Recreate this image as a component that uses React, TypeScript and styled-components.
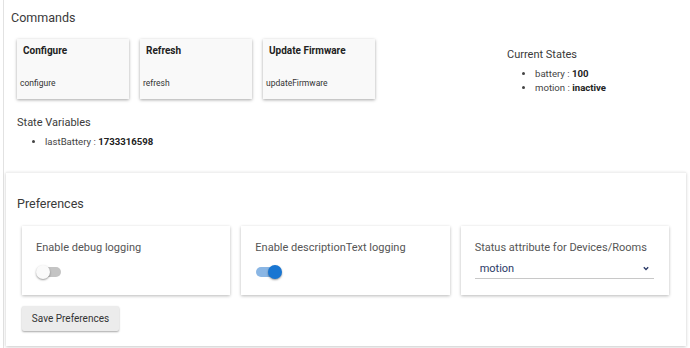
import React from 'react';
import styled, { createGlobalStyle } from 'styled-components';

const GlobalStyle = createGlobalStyle`
  body {
    margin: 0;
    background: #fff;
    font-family: Roboto, 'Liberation Sans', sans-serif;
    color: #333;
  }
`;

const Frame = styled.div`
  padding-left: 3px;
`;

const Inner = styled.div`
  border-left: 1px solid #e2e2e2;
  min-height: 348px;
  box-sizing: border-box;
  padding: 10px 4px 2px 2px;
`;

const Top = styled.div`
  display: flex;
  padding: 0 0 23px 5px;
`;

const LeftCol = styled.div`
  width: 496px;
`;

const RightCol = styled.div`
  padding-top: 38px;
`;

const Heading = styled.div<{ $size?: number }>`
  font-size: ${(p) => p.$size ?? 11}px;
  line-height: ${(p) => (p.$size ? 16 : 14)}px;
  color: #3a3a3a;
`;

const CommandRow = styled.div`
  display: flex;
  gap: 11px;
  margin: 13px 0 17px 6px;
`;

const CommandCard = styled.div`
  width: 112px;
  height: 60px;
  box-sizing: border-box;
  background: #f9f9f9;
  box-shadow: 0 1px 3px rgba(0, 0, 0, 0.35);
  display: flex;
  flex-direction: column;
  justify-content: space-between;
`;

const CommandTitle = styled.div`
  font-size: 10px;
  line-height: 14px;
  font-weight: 700;
  color: #222;
  padding: 5px 6px 0;
`;

const CommandName = styled.div`
  font-size: 8.5px;
  line-height: 12px;
  color: #333;
  padding: 0 3px 10px;
`;

const Section = styled.div`
  padding-left: 6px;
`;

const List = styled.ul<{ $indent: number }>`
  margin: 5px 0 0;
  padding-left: ${(p) => p.$indent}px;
  font-size: 9.6px;
  line-height: 14px;
  color: #444;

  b {
    color: #222;
  }
`;

const PrefCard = styled.div`
  background: #fff;
  box-shadow: 0 1px 3px rgba(0, 0, 0, 0.22);
  border-top: 1px solid #f0f0f0;
  padding: 23px 17px 15px 11px;
`;

const PrefGrid = styled.div`
  display: grid;
  grid-template-columns: repeat(3, 1fr);
  gap: 11px;
  margin: 14px 0 11px 5px;
`;

const PrefItem = styled.div`
  height: 69px;
  box-sizing: border-box;
  padding: 15px 15px 0 14px;
  background: #fff;
  box-shadow: 0 1px 3px rgba(0, 0, 0, 0.28);
`;

const PrefLabel = styled.div`
  font-size: 11px;
  line-height: 14px;
  color: #555;
`;

const Toggle = styled.div<{ $on?: boolean }>`
  position: relative;
  margin-top: 10px;
  width: 26px;
  height: 14px;

  &::before {
    content: '';
    position: absolute;
    left: 1px;
    right: 1px;
    top: 2px;
    height: 10px;
    border-radius: 5px;
    background: ${(p) => (p.$on ? '#8ab6e4' : '#c4c4c4')};
  }

  &::after {
    content: '';
    position: absolute;
    top: 0;
    ${(p) => (p.$on ? 'right: -1px;' : 'left: 0;')}
    width: 14px;
    height: 14px;
    border-radius: 50%;
    background: ${(p) => (p.$on ? '#1976d2' : '#fafafa')};
    box-shadow: 0 1px 2px rgba(0, 0, 0, 0.4);
  }
`;

const Select = styled.div`
  display: flex;
  align-items: center;
  justify-content: space-between;
  margin-top: 3px;
  padding: 0 5px 0 5px;
  height: 20px;
  border-bottom: 1px solid #c8c8c8;
  font-size: 11px;
  color: #2b3a67;
`;

const SaveButton = styled.button`
  margin-left: 5px;
  width: 97px;
  height: 25px;
  border: none;
  border-radius: 2px;
  background: #ececec;
  box-shadow: 0 1px 2px rgba(0, 0, 0, 0.35);
  font-family: Roboto, 'Liberation Sans', sans-serif;
  font-size: 10px;
  color: #333;
  padding: 0;
`;

const commands = [
  { title: 'Configure', name: 'configure' },
  { title: 'Refresh', name: 'refresh' },
  { title: 'Update Firmware', name: 'updateFirmware' },
];

const Chevron = () => (
  <svg width="6" height="5" viewBox="0 0 6 5">
    <path d="M0.8 1.2 L3 3.4 L5.2 1.2" fill="none" stroke="#2b3a67" strokeWidth="1.4" />
  </svg>
);

const App: React.FC = () => (
  <Frame>
    <GlobalStyle />
    <Inner>
      <Top>
        <LeftCol>
          <Heading $size={12.5}>Commands</Heading>
          <CommandRow>
            {commands.map((c) => (
              <CommandCard key={c.name}>
                <CommandTitle>{c.title}</CommandTitle>
                <CommandName>{c.name}</CommandName>
              </CommandCard>
            ))}
          </CommandRow>
          <Section>
            <Heading>State Variables</Heading>
            <List $indent={28}>
              <li>
                lastBattery : <b>1733316598</b>
              </li>
            </List>
          </Section>
        </LeftCol>
        <RightCol>
          <Heading>Current States</Heading>
          <List $indent={28}>
            <li>
              battery : <b>100</b>
            </li>
            <li>
              motion : <b>inactive</b>
            </li>
          </List>
        </RightCol>
      </Top>
      <PrefCard>
        <Heading $size={12.5}>Preferences</Heading>
        <PrefGrid>
          <PrefItem>
            <PrefLabel>Enable debug logging</PrefLabel>
            <Toggle />
          </PrefItem>
          <PrefItem>
            <PrefLabel>Enable descriptionText logging</PrefLabel>
            <Toggle $on />
          </PrefItem>
          <PrefItem>
            <PrefLabel>Status attribute for Devices/Rooms</PrefLabel>
            <Select>
              <span>motion</span>
              <Chevron />
            </Select>
          </PrefItem>
        </PrefGrid>
        <SaveButton>Save Preferences</SaveButton>
      </PrefCard>
    </Inner>
  </Frame>
);

export default App;
